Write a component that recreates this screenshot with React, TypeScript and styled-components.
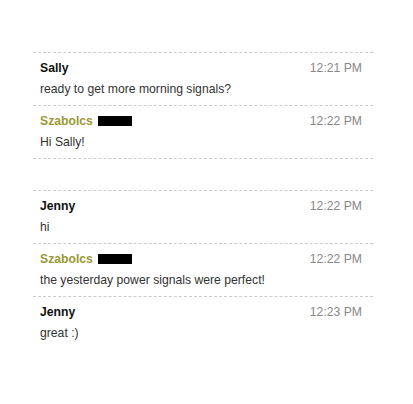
import React from "react";
import styled, { createGlobalStyle } from "styled-components";

const Global = createGlobalStyle`
  html, body { margin: 0; padding: 0; background: #fff; }
  body { font-family: "Liberation Sans", Arial, sans-serif; font-size: 12.2px; }
`;

const Thread = styled.div`
  width: 340px;
  margin: 52px 0 0 33px;
`;

const Row = styled.div`
  border-top: 1px dashed #cccccc;
  padding: 6px 11px 7px 7px;
`;

const Header = styled.div`
  display: flex;
  justify-content: space-between;
  align-items: center;
  height: 18px;
  line-height: 18px;
`;

const Name = styled.span<{ $me?: boolean }>`
  font-weight: bold;
  color: ${(p) => (p.$me ? "#9a9834" : "#111111")};
  display: inline-flex;
  align-items: center;
`;

const Redact = styled.span`
  display: inline-block;
  width: 34px;
  height: 10px;
  background: #000;
  margin-left: 5px;
`;

const Time = styled.span`
  color: #888888;
`;

const Text = styled.div`
  margin-top: 3px;
  line-height: 18px;
  color: #333333;
`;

type Msg = { name?: string; me?: boolean; time?: string; text?: string };

const msgs: Msg[] = [
  { name: "Sally", time: "12:21 PM", text: "ready to get more morning signals?" },
  { name: "Szabolcs", me: true, time: "12:22 PM", text: "Hi Sally!" },
  {},
  { name: "Jenny", time: "12:22 PM", text: "hi" },
  { name: "Szabolcs", me: true, time: "12:22 PM", text: "the yesterday power signals were perfect!" },
  { name: "Jenny", time: "12:23 PM", text: "great :)" },
];

export default function App() {
  return (
    <>
      <Global />
      <Thread>
        {msgs.map((m, i) => (
          <Row key={i}>
            <Header>
              {m.name ? (
                <Name $me={m.me}>
                  {m.name}
                  {m.me && <Redact />}
                </Name>
              ) : (
                <span />
              )}
              {m.time && <Time>{m.time}</Time>}
            </Header>
            {m.text && <Text>{m.text}</Text>}
          </Row>
        ))}
      </Thread>
    </>
  );
}
